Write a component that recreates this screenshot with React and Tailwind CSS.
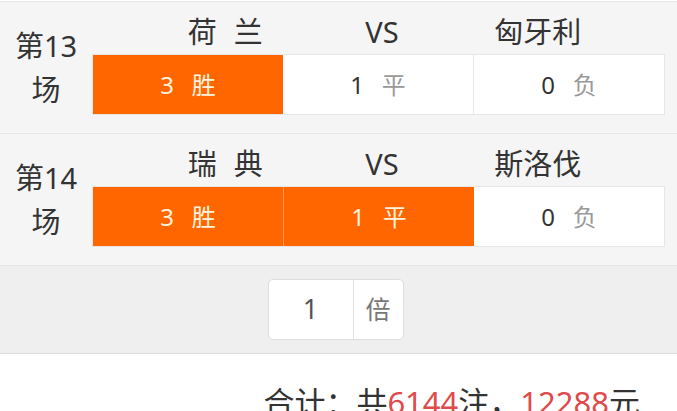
const matches = [
  { no: 13, home: ["荷", "兰"], away: "匈牙利", picks: ["3"] },
  { no: 14, home: ["瑞", "典"], away: "斯洛伐", picks: ["3", "1"] },
];

const options = [
  { key: "3", label: "胜" },
  { key: "1", label: "平" },
  { key: "0", label: "负" },
];

function Cell({ opt, on, first, prevOn }) {
  const border = first ? "" : on && prevOn ? "border-l border-[#ff9a5c]" : on || prevOn ? "" : "border-l border-[#e6e6e6]";
  return (
    <div className={`flex-1 flex items-center justify-center gap-[18px] ${border} ${on ? "bg-[#ff6600]" : "bg-white"}`}>
      <span className={`text-[24px] ${on ? "text-[#fff3df]" : "text-[#333]"}`}>{opt.key}</span>
      <span className={`text-[24px] ${on ? "text-[#fff3df]" : "text-[#999]"}`}>{opt.label}</span>
    </div>
  );
}

function MatchRow({ m }) {
  return (
    <div className="flex border-b border-[#e6e6e6] bg-[#f5f5f5]">
      <div className="w-[92px] flex flex-col items-center justify-center text-[29px] leading-[44px] text-[#333]">
        <span>第{m.no}</span>
        <span>场</span>
      </div>
      <div className="w-[573px] pt-[10px] pb-[18px]">
        <div className="flex h-[39px] items-center text-[29px] text-[#333]">
          <div className="flex-1 flex justify-end gap-[17px] pr-[24px]">
            <span>{m.home[0]}</span>
            <span>{m.home[1]}</span>
          </div>
          <div className="flex-1 text-center pl-[10px]">VS</div>
          <div className="flex-1 text-left pl-[27px]">{m.away}</div>
        </div>
        <div className="mt-[3px] flex h-[61px] border border-[#e6e6e6] bg-white">
          {options.map((o, i) => (
            <Cell
              key={o.key}
              opt={o}
              first={i === 0}
              on={m.picks.includes(o.key)}
              prevOn={i > 0 && m.picks.includes(options[i - 1].key)}
            />
          ))}
        </div>
      </div>
    </div>
  );
}

export default function App() {
  return (
    <div className="w-[677px] h-[411px] overflow-hidden bg-white pt-px font-['Noto_Sans','Noto_Sans_CJK_SC',sans-serif]">
      <div className="border-t border-[#e6e6e6]">
        {matches.map(m => <MatchRow key={m.no} m={m} />)}
      </div>

      <div className="flex justify-center py-[13px] pr-[6px] bg-[#efefef] border-b border-[#dcdcdc]">
        <div className="flex h-[61px] w-[136px] rounded-[5px] border border-[#dddddd] bg-white">
          <div className="w-[84px] flex items-center justify-center text-[27px] text-[#555]">1</div>
          <div className="flex-1 flex items-center justify-center border-l border-[#e3e3e3] text-[25px] text-[#777]">倍</div>
        </div>
      </div>

      <div className="pt-[28px] pr-[37px] text-right text-[31px] leading-[40px] text-[#333]">
        合计：共<span className="text-[#e04a4a]">6144</span>注，<span className="text-[#e04a4a]">12288</span>元
      </div>
    </div>
  );
}
